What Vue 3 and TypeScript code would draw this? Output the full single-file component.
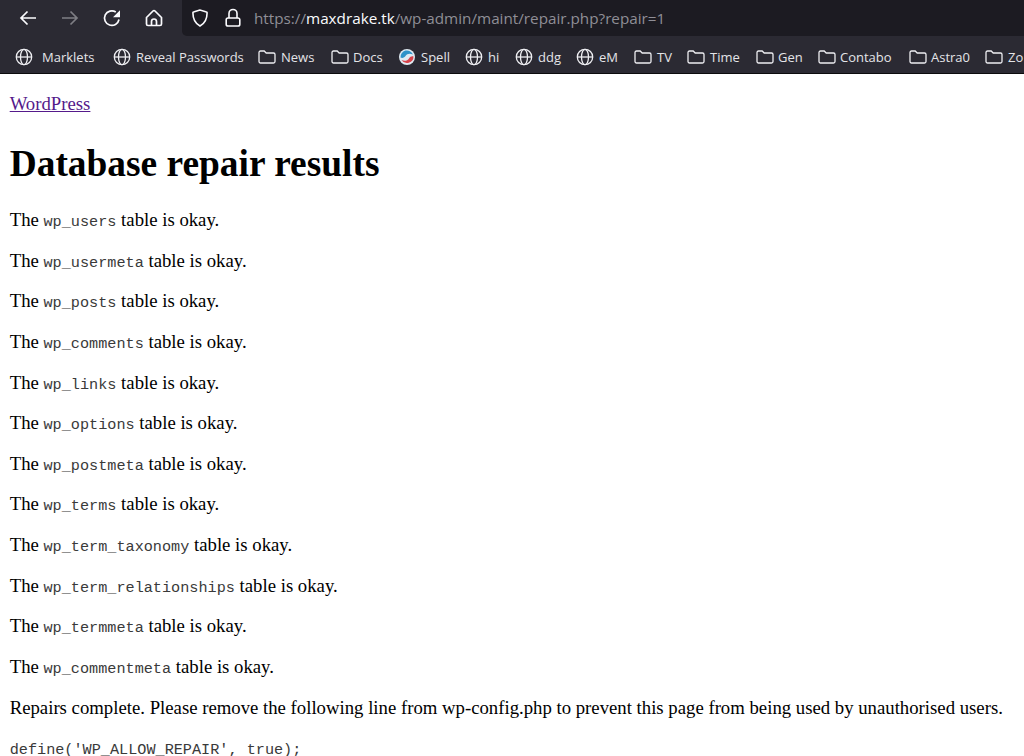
<script setup lang="ts">
const tables = ['wp_users','wp_usermeta','wp_posts','wp_comments','wp_links','wp_options','wp_postmeta','wp_terms','wp_term_taxonomy','wp_term_relationships','wp_termmeta','wp_commentmeta']
type Mark = { label: string; icon: 'globe' | 'folder' | 'spell'; w: number; gap: number }
const marks: Mark[] = [
  { label: 'Marklets', icon: 'globe', w: 98, gap: 9 },
  { label: 'Reveal Passwords', icon: 'globe', w: 145, gap: 5 },
  { label: 'News', icon: 'folder', w: 73, gap: 5 },
  { label: 'Docs', icon: 'folder', w: 67, gap: 4 },
  { label: 'Spell', icon: 'spell', w: 67, gap: 5 },
  { label: 'hi', icon: 'globe', w: 50, gap: 5 },
  { label: 'ddg', icon: 'globe', w: 61, gap: 5 },
  { label: 'eM', icon: 'globe', w: 58, gap: 5 },
  { label: 'TV', icon: 'folder', w: 53, gap: 5 },
  { label: 'Time', icon: 'folder', w: 69, gap: 5 },
  { label: 'Gen', icon: 'folder', w: 62, gap: 4 },
  { label: 'Contabo', icon: 'folder', w: 91, gap: 4 },
  { label: 'Astra0', icon: 'folder', w: 76, gap: 4 },
  { label: 'Zo', icon: 'folder', w: 50, gap: 5 },
]
</script>

<template>
  <div class="page">
    <header class="chrome">
      <div class="toolbar">
        <div class="navs">
          <svg class="nav" viewBox="0 0 20 20"><path d="M18 10H3M9.500 3.500 3 10l6.500 6.500"/></svg>
          <svg class="nav off" viewBox="0 0 20 20"><path d="M2 10h15M10.500 3.500 17 10l-6.500 6.500"/></svg>
          <svg class="nav" viewBox="0 0 20 20"><path d="M17 11.500A7.300 7.300 0 1 1 13.800 4"/><path class="fill" d="M18 2.200v7h-7z"/></svg>
          <svg class="nav" viewBox="0 0 20 20"><path d="M2.500 9.500 9 3a1.400 1.400 0 0 1 2 0l6.500 6.500V16a1.500 1.500 0 0 1-1.500 1.500H4A1.500 1.500 0 0 1 2.500 16zM7.500 17.500v-4a2.500 2.500 0 0 1 5 0v4"/></svg>
        </div>
        <div class="urlbar">
          <svg class="shield" viewBox="0 0 20 20"><path d="M10 2 3.500 4a.8.8 0 0 0-.6.8C2.900 11 5 15.500 10 18c5-2.500 7.100-7 7.100-13.200a.8.8 0 0 0-.6-.8z"/></svg>
          <svg class="lock" viewBox="0 0 20 20"><path d="M6 10V5.500a4 4 0 0 1 8 0V10M5 10h10a1.800 1.800 0 0 1 1.800 1.800v4.400A1.800 1.800 0 0 1 15 18H5a1.800 1.800 0 0 1-1.800-1.800v-4.400A1.800 1.800 0 0 1 5 10z"/></svg>
          <span class="url">https://<b>maxdrake.tk</b>/wp-admin/maint/repair.php?repair=1</span>
        </div>
      </div>
      <nav class="marks">
        <div v-for="m in marks" :key="m.label" class="mark" :style="{ width: m.w + 'px', gap: m.gap + 'px' }">
          <svg v-if="m.icon === 'globe'" class="ico" viewBox="0 0 18 18"><circle cx="9" cy="9" r="7.700"/><ellipse cx="9" cy="9" rx="3.500" ry="7.700"/><path d="M1.300 9h15.400"/></svg>
          <svg v-else-if="m.icon === 'folder'" class="ico" viewBox="0 0 18 18"><path d="M1 4.500A1.500 1.500 0 0 1 2.500 3h3.700l2 2h7.300A1.500 1.500 0 0 1 17 6.500v7a1.500 1.500 0 0 1-1.500 1.500h-13A1.500 1.500 0 0 1 1 13.500z"/></svg>
          <svg v-else class="ico spell" viewBox="0 0 18 18"><circle cx="9" cy="9" r="8" fill="#dfeaf2"/><path d="M2.500 9.500A6.500 6.500 0 0 1 15 6.500C12 5 9 5.500 7.500 8c-1 1.500-3 2.500-5 1.500z" fill="#2f93c9"/><path d="M15.500 8.500A6.500 6.500 0 0 1 3.500 12c3 1.500 6 .8 7.500-1.500 1-1.500 2.500-2.500 4.500-2z" fill="#d8434a"/></svg>
          <span>{{ m.label }}</span>
        </div>
      </nav>
    </header>
    <main class="doc">
      <p><a href="#">WordPress</a></p>
      <h1>Database repair results</h1>
      <p v-for="t in tables" :key="t">The <code>{{ t }}</code> table is okay.</p>
      <p>Repairs complete. Please remove the following line from wp-config.php to prevent this page from being used by unauthorised users.</p>
      <code class="def">define('WP_ALLOW_REPAIR', true);</code>
    </main>
  </div>
</template>

<style>
html, body { margin: 0; background: #fff; overflow: hidden; }
</style>

<style scoped>
.page { height: 756px; overflow: hidden; display: flex; flex-direction: column; }
.chrome { flex: none; height: 74px; background: #2b2a33; border-bottom: 1px solid #0c0c0d; box-sizing: border-box; font-family: "Open Sans", "Noto Sans", sans-serif; }
.toolbar { display: flex; height: 36px; }
.navs { width: 182px; flex: none; display: flex; align-items: center; gap: 22px; padding-left: 18px; box-sizing: border-box; }
.nav { width: 20px; height: 20px; fill: none; stroke: #fbfbfe; stroke-width: 1.700; flex: none; }
.nav.off { opacity: .4; }
.nav .fill { fill: #fbfbfe; stroke: none; }
.urlbar { flex: 1; display: flex; align-items: center; background: #1c1b22; border-bottom-left-radius: 5px; min-width: 0; }
.shield { width: 20px; height: 20px; fill: none; stroke: #fbfbfe; stroke-width: 1.600; margin-left: 8px; }
.lock { width: 20px; height: 20px; fill: none; stroke: #fbfbfe; stroke-width: 1.600; margin-left: 13px; }
.url { margin-left: 11px; font-size: 15.250px; color: #8f8e96; white-space: nowrap; }
.url b { color: #fbfbfe; font-weight: 400; }
.marks { display: flex; height: 37px; overflow: hidden; padding: 4px 0 0 15px; box-sizing: border-box; }
.mark { flex: none; display: flex; align-items: center; font-size: 13px; color: #e4e4e8; white-space: nowrap; }
.ico { width: 18px; height: 18px; flex: none; fill: none; stroke: #eeeef2; stroke-width: 1.300; }
.ico.spell { stroke: none; }
.doc { flex: 1; min-height: 0; padding: 19px 10px 0 9.700px; font-family: "Liberation Serif", "Times New Roman", serif; font-size: 18.740px; line-height: 21px; color: #000; }
p { margin: 0 0 19.450px; white-space: nowrap; }
a { color: #551a8b; }
h1 { font-size: 37.400px; line-height: 42px; margin: 29px 0 24px; font-weight: 700; }
code { font-family: "Liberation Mono", "Courier New", monospace; font-size: 15.200px; line-height: 1; color: #3a3a3a; }
.def { display: block; white-space: nowrap; line-height: 21px; margin-top: 22px; }
</style>
